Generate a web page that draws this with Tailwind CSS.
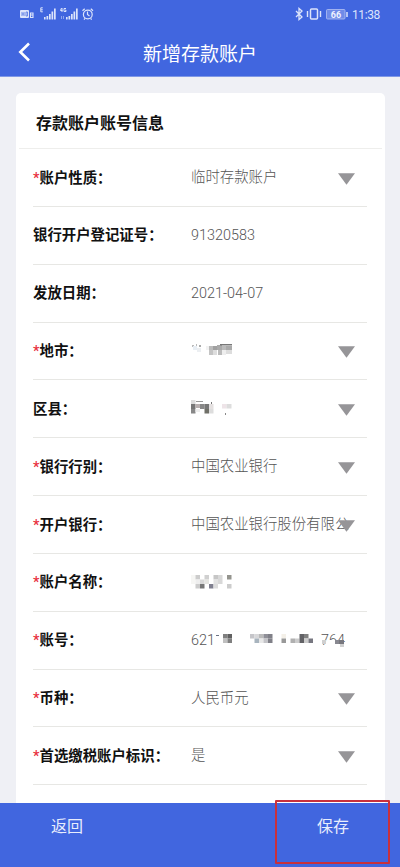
<!DOCTYPE html>
<html lang="zh-CN">
<head>
<meta charset="utf-8">
<title>新增存款账户</title>
<script src="https://cdn.jsdelivr.net/npm/@tailwindcss/browser@4"></script>
</head>
<body class="w-[400px] h-[867px] overflow-hidden flex flex-col bg-[#eff0f5] font-[Roboto,'Noto_Sans_CJK_SC',sans-serif]">
<header class="h-[77px] shrink-0 bg-[#4166df] text-white flex flex-col border-b border-[#7f98e6]">
  <div class="h-[28px] flex items-center justify-between pl-5 pr-[20px] text-[#dce4fb]">
    <svg class="w-[76px] h-[14px]" viewBox="0 0 76 14" fill="currentColor">
      <rect x="0" y="3" width="9" height="8" rx="1"/>
      <path d="M2 5v4M4 5v4M2 7h2M6 5v4h1.500V5z" stroke="#5f7fe4" stroke-width=".9" fill="none"/>
      <path d="M10.500 6h2.500v4.500h-2.500zM10.500 8h2.500" fill="none" stroke="currentColor" stroke-width="1.100"/>
      <path d="M22.800 .8h-2v4h2M21 2.800h1.800" fill="none" stroke="currentColor" stroke-width="1"/>
      <path d="M24 10h1.600v2.500H24zM26.500 9h1.700v3.500h-1.700zM29 7h1.700v5.500H29zM31.500 4.500h1.700v8h-1.700zM34 1.500h1.700v11H34z"/>
      <path d="M41.500 1l-1 2.500h2M42 1v4M46 1.500h-2v3h2V3.200h-1" fill="none" stroke="currentColor" stroke-width="1"/>
      <path d="M41 9h1v3h-1zM43 9h1v3h-1z" opacity=".5"/>
      <path d="M46 10h1.600v2.500H46zM48.500 9h1.700v3.500h-1.700zM51 7h1.700v5.500H51zM53.500 4.500h1.700v8h-1.700zM56 1.500h1.700v11H56z"/>
      <g fill="none" stroke="currentColor" stroke-width="1.200"><circle cx="67.800" cy="7.500" r="4.400"/><path d="M67.500 4.500V7.500l2 1.500M62.500 3.800l2.200-2M73 3.800l-2.200-2M65 11.300l-1 1.300M70.600 11.300l1 1.300"/></g>
    </svg>
    <div class="flex items-center">
      <svg class="w-[54px] h-[14px] mr-[3px]" viewBox="0 0 54 14" fill="none" stroke="currentColor">
        <path d="M1 4l6 6-3 2.500V1.500L7 4l-6 6" stroke-width="1.300"/>
        <rect x="15.500" y="2" width="7" height="10" rx="1" stroke-width="1.500"/>
        <path d="M12.500 4v6M25.500 4v6" stroke-width="1.400"/>
        <rect x="31.500" y="2.500" width="18.500" height="9.500" rx="1" stroke="#a9b9f2" stroke-width=".9" fill="#6f8be8"/>
        <path d="M52 5v5" stroke-width="1.500"/>
        <text x="35.800" y="10.500" font-size="9" font-weight="700" fill="#f0f3ff" stroke="none">66</text>
      </svg>
      <span class="text-[12px] leading-[14px] tracking-[-0.4px] w-[28px] whitespace-nowrap pt-px">11:38</span>
    </div>
  </div>
  <div class="h-[48px] flex items-center">
    <div class="w-[50px] pl-[18px] pb-[1px]"><svg class="w-[14px] h-[20px]" viewBox="0 0 14 20" fill="none" stroke="white" stroke-width="2.600"><path d="M11 1.500L2.300 10l8.700 8.500"/></svg></div>
    <h1 class="flex-1 text-center text-[19px] leading-[28px] font-normal mr-[50px] pt-[6px]">新增存款账户</h1>
  </div>
</header>
<main class="flex-1 min-h-0 pt-4 pl-4 pr-[15px] overflow-hidden">
  <section class="bg-white rounded-t-[5px] h-[720px]">
    <h2 class="h-[56px] mx-[3px] pl-[17px] pt-[19px] text-[16px] leading-[24px] font-bold text-[#111] border-b border-[#eeeeec]">存款账户账号信息</h2>
    <div id="rows" class="pl-[17px] pr-[18px]"></div>
  </section>
</main>
<footer class="relative h-[64px] shrink-0 bg-[#4166df] flex justify-between items-start pl-[51px] pr-[51px] pt-[12px] text-[16px] leading-[24px] text-[#e8edfd]">
  <span>返回</span><span>保存</span>
  <div class="absolute left-[275px] top-[-3px] w-[115px] h-[64px] border-2 border-[#c8303c] rounded-[1px]"></div>
</footer>
<script>
// Masked values are stored as rows of [x, y, width, height, shade]
const masks = {
  city: [[1,1,2,2,'#bbb'],[5,0,1,2,'#bbb'],[8,1,2,2,'#aaa'],[2,2,4,4,'#e8eef4'],[6,4,4,4,'#eceff2'],[15,2,4,4,'#f2f2f2'],[18,2,4,4,'#bbb'],[22,2,4,4,'#a0a0a0'],[26,1,5,5,'#aaa'],[29,0,12,1.5,'#777'],[31,2,4,4,'#bbb'],[35,2,6,4,'#aaa'],[18,6,4,5,'#c4c4c4'],[22,6,4,5,'#ddd'],[27,6,4,5,'#bbb'],[31,6,4,5,'#eee'],[35,6,6,4,'#ddd']],
  area: [[0,-1,4.500,4.500,'#ddd'],[5,0,7,1,'#999'],[20,1,1,2,'#777'],[0,3,4.500,5,'#777'],[4.500,3,4.500,4,'#b8b0b0'],[9,3,4.500,5,'#888'],[13.500,3,4.500,5,'#777'],[18,3,4.500,5,'#e4e0e0'],[31,3,4.500,4.500,'#eee4e8'],[35.500,3,5,4.500,'#ddd'],[0,8,4.500,4.500,'#888'],[4.500,8,4.500,3,'#eee'],[13.500,8,4.500,4.500,'#707068'],[18,8,4.500,4.500,'#ddd'],[34,12,1,2,'#888']],
  name: [[0,0,4.500,9,'#f6f6f4'],[4.500,0,4.500,4.500,'#ccc'],[13.500,0,4.500,4.500,'#d0d0d0'],[22.500,0,4.500,4.500,'#c6c6c6'],[27,0,4.500,9,'#d8d8d8'],[36,0,4.500,4.500,'#94948e'],[4.500,4.500,4.500,4.500,'#eee'],[9,4.500,4.500,4.500,'#d8d8d8'],[13.500,4.500,4.500,4.500,'#e4e4e0'],[22.500,4.500,4.500,4.500,'#e2e2e2'],[4.500,9,4.500,4.500,'#ccc'],[9,9,4.500,4.500,'#777'],[18,9,4.500,4.500,'#808090'],[22.500,9,4.500,4.500,'#ddd'],[36,9,4.500,4.500,'#ccc']],
  acct: [[0,0,4.500,4.500,'#808080'],[4.500,0,4.500,4.500,'#606060'],[0,4.500,4.500,4.500,'#c0c0c0'],[4.500,4.500,4.500,4.500,'#808080'],[27,0,4.500,4.500,'#c6c6ca'],[31.500,0,4.500,4.500,'#d8d8da'],[36,0,4.500,4.500,'#bbb'],[40.500,0,4.500,4.500,'#909098'],[45,0,4.500,4.500,'#808088'],[31.500,4.500,4.500,4.500,'#a8b4be'],[36,4.500,4.500,4.500,'#e8e8e8'],[40.500,4.500,4.500,4.500,'#c4c4c8'],[45,4.500,4.500,4.500,'#808088'],[58.500,0,4.500,4.500,'#f4f0e8'],[58.500,4.500,4.500,4.500,'#999'],[67.500,4.500,4.500,4.500,'#b0b0b0'],[72,4.500,4.500,4.500,'#ccc'],[76.500,0,4.500,9,'#626266'],[81,0,4.500,4.500,'#808080'],[81,4.500,4.500,4.500,'#ccc'],[85.500,4.500,4.500,4.500,'#777780']]
};
const mosaic = k => `<svg class="block w-[92px] h-[16px] overflow-visible" viewBox="0 0 92 16">${masks[k].map(([x,y,w,h,c]) => `<rect x="${x}" y="${y}" width="${w}" height="${h}" fill="${c}"/>`).join('')}</svg>`;
const account = `<span class="w-[24px]">621</span><span class="w-[8px] h-[16px]"><i class="block mt-[5px] w-[3px] ml-[1px] h-px bg-gray-500"></i></span><div class="pt-[4px] w-[98px] h-[20px]">${mosaic('acct')}</div><div class="relative w-[28px]">764<svg class="absolute left-0 top-0 w-[28px] h-[22px]" viewBox="0 0 28 22"><path fill="white" d="M8 10h8v8H8z"/><path fill="#d0d0d0" d="M1 10h4v4H1zM19 14h4v3h-4z"/><path fill="#888890" d="M14 10h4v4h-4z"/><path fill="#77777d" d="M18 10h5v4h-5z"/></svg></div>`;
const fields = [
  [1,'账户性质','临时存款账户',1],
  [0,'银行开户登记证号','91320583',0],
  [0,'发放日期','2021-04-07',0],
  [1,'地市',mosaic('city'),1],
  [0,'区县',mosaic('area'),1],
  [1,'银行行别','中国农业银行',1],
  [1,'开户银行','中国农业银行股份有限公',1],
  [1,'账户名称',mosaic('name'),0],
  [1,'账号',account,0],
  [1,'币种','人民币元',1],
  [1,'首选缴税账户标识','是',1]
];
document.getElementById('rows').innerHTML = fields.map(([req,label,value,menu]) => `
<div class="relative h-[57.85px] border-b border-[#e7e7e4] flex pt-[18px] whitespace-nowrap">
  <div class="w-[158px] flex pt-[0.5px] text-[14.4px] leading-[22px] font-bold text-[#111]">${req ? '<span class="w-[6.500px] text-[#e8303c] font-medium">*</span>' : ''}<span>${label}：</span></div>
  <div class="w-[160px] flex text-[14.4px] leading-[22px] font-light text-[#555] ${value.startsWith('<svg') ? 'pt-[3px]' : ''}">${value}</div>
  ${menu ? '<svg class="absolute right-[12px] top-[23.500px] w-[17px] h-[12px]" viewBox="0 0 18 12"><path d="M0 0h18L9 12z" fill="#969598"/></svg>' : ''}
</div>`).join('');
</script>
</body>
</html>
